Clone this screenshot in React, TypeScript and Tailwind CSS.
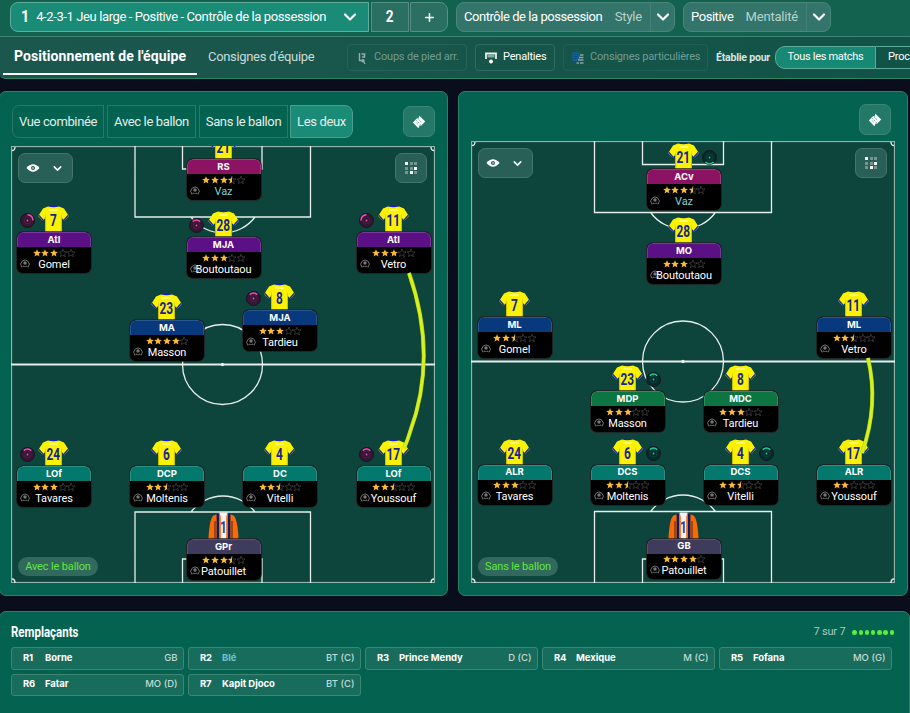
import type { ReactNode } from "react";
import { ChevronDown, Plus } from "lucide-react";
import { clsx } from "clsx";

type Arc = "top" | "bottom" | "left" | "right";

interface Player {
  num: number;
  role: string;
  name: string;
  stars: number;
  x: number;
  y: number;
  color: string;
  duty?: Arc;
  keeper?: boolean;
}

interface PitchProps {
  height: number;
  label: string;
  players: Player[];
  lines: string;
  radius: number;
  middle: [number, number];
  link: string;
  dutyColor: "pink" | "teal";
}

const PINK = "bg-[#8c1263] border-[#a13a7d]";
const PURPLE = "bg-[#5c1085] border-[#77389a]";
const BLUE = "bg-[#07397c] border-[#2c5590]";
const TEAL = "bg-[#03786c] border-[#2b9184]";
const GREEN = "bg-[#0c7541] border-[#328c5e]";
const SLATE = "bg-[#3f3b5d] border-[#56526f]";

const WITH_BALL: Player[] = [
  { num: 21, role: "RS", name: "Vaz", stars: 3.5, x: 212.5, y: 13, color: PINK },
  { num: 7, role: "AtI", name: "Gomel", stars: 3, x: 43, y: 86, color: PURPLE, duty: "right" },
  { num: 28, role: "MJA", name: "Boutoutaou", stars: 3, x: 212.5, y: 91, color: PURPLE, duty: "top" },
  { num: 11, role: "AtI", name: "Vetro", stars: 3, x: 382.5, y: 86, color: PURPLE, duty: "left" },
  { num: 23, role: "MA", name: "Masson", stars: 4, x: 156, y: 174, color: BLUE },
  { num: 8, role: "MJA", name: "Tardieu", stars: 3, x: 269, y: 164, color: BLUE, duty: "top" },
  { num: 24, role: "LOf", name: "Tavares", stars: 3, x: 43, y: 320, color: TEAL, duty: "top" },
  { num: 6, role: "DCP", name: "Moltenis", stars: 2.5, x: 156, y: 320, color: TEAL },
  { num: 4, role: "DC", name: "Vitelli", stars: 2.5, x: 269, y: 320, color: TEAL },
  { num: 17, role: "LOf", name: "Youssouf", stars: 2.5, x: 382.5, y: 320, color: TEAL, duty: "top" },
  { num: 1, role: "GPr", name: "Patouillet", stars: 3.5, x: 212.5, y: 393, color: SLATE, keeper: true },
];

const WITHOUT_BALL: Player[] = [
  { num: 21, role: "ACv", name: "Vaz", stars: 3.5, x: 213, y: 28, color: PINK, duty: "bottom" },
  { num: 28, role: "MO", name: "Boutoutaou", stars: 3, x: 213, y: 102, color: PURPLE },
  { num: 7, role: "ML", name: "Gomel", stars: 2.5, x: 43.5, y: 176, color: BLUE },
  { num: 11, role: "ML", name: "Vetro", stars: 2.5, x: 383, y: 176, color: BLUE },
  { num: 23, role: "MDP", name: "Masson", stars: 3, x: 156.5, y: 250, color: GREEN, duty: "top" },
  { num: 8, role: "MDC", name: "Tardieu", stars: 3, x: 269.5, y: 250, color: GREEN },
  { num: 24, role: "ALR", name: "Tavares", stars: 3, x: 43.5, y: 323.5, color: TEAL },
  { num: 6, role: "DCS", name: "Moltenis", stars: 2.5, x: 156.5, y: 323.5, color: TEAL, duty: "top" },
  { num: 4, role: "DCS", name: "Vitelli", stars: 2.5, x: 269.5, y: 323.5, color: TEAL, duty: "top" },
  { num: 17, role: "ALR", name: "Youssouf", stars: 2, x: 383, y: 323.5, color: TEAL },
  { num: 1, role: "GB", name: "Patouillet", stars: 4, x: 213, y: 397.5, color: SLATE, keeper: true },
];

const SUBS = [
  { id: "R1", name: "Borne", pos: "GB" },
  { id: "R2", name: "Blé", pos: "BT (C)", highlight: true },
  { id: "R3", name: "Prince Mendy", pos: "D (C)" },
  { id: "R4", name: "Mexique", pos: "M (C)" },
  { id: "R5", name: "Fofana", pos: "MO (G)" },
  { id: "R6", name: "Fatar", pos: "MO (D)" },
  { id: "R7", name: "Kapit Djoco", pos: "BT (C)" },
];

const STAR = "M4 0.2 5.05 2.85 7.9 3 5.7 4.8 6.45 7.6 4 6.05 1.55 7.6 2.3 4.8 0.1 3 2.95 2.85Z";
const HALF_STAR = "M4 0.2V6.05L1.55 7.6 2.3 4.8 0.1 3 2.95 2.85Z";

function Star({ value }: { value: number }) {
  return (
    <svg viewBox="0 0 8 8" className="size-2">
      {value < 1 && (
        <path d={STAR} fill="none" stroke="#7c7c7c" strokeWidth="0.6" strokeDasharray="1 0.5" />
      )}
      {value > 0 && <path d={value >= 1 ? STAR : HALF_STAR} fill="#fbbb35" />}
    </svg>
  );
}

function Shirt({ num }: { num: number }) {
  return (
    <svg viewBox="0 0 31 27" className="h-[27px] w-[31px]">
      <path d="M12 0.8H19L20 2.8H11Z" fill="#1420c4" />
      <path d="M10 1.6Q15.5 3 21 1.6L26 3.4 30.8 11 26.4 15.8 23.9 13V27H7.1V13L4.6 15.8 0.2 11 5 3.4Z" fill="#fbf203" />
      <path d="M0.2 10.4 4.7 16 5.6 14.8 1 9.4ZM30.8 10.4 26.3 16 25.4 14.8 30 9.4Z" fill="#1a25bb" />
      <path d="M7.1 13.2 8 8 8.2 27H7.1ZM23.9 13.2 23 8 22.8 27H23.9Z" fill="#c9bd08" />
      <path d="M11 5H20" stroke="#fffa8c" strokeWidth="1.6" />
      <text
        x="0"
        y="0"
        transform="translate(15.3 20.8) scale(0.74 1)"
        textAnchor="middle"
        className="font-['Roboto'] text-[16px] font-bold"
        fill="#16239a"
      >
        {num}
      </text>
    </svg>
  );
}

function KeeperShirt({ num }: { num: number }) {
  return (
    <svg viewBox="0 0 31 27" className="h-[27px] w-[31px]">
      <path d="M11 1.5 5.5 3.4Q1.5 6 0.4 27H30.6Q29.5 6 25.5 3.4L20 1.5Z" fill="#fb6805" />
      <path d="M7 9V27M24 9V27" stroke="#5c3424" strokeWidth="1.2" />
      <path d="M9.8 2V27M21.2 2V27" stroke="#0d1d63" strokeWidth="2.4" />
      <path d="M11.6 1H19.4V27H11.6Z" fill="#fb6805" />
      <path d="M11.5 0.5H19.5L18.2 5V27H12.8V5Z" fill="#f3f3f6" />
      <text
        x="0"
        y="0"
        transform="translate(15.3 20.8) scale(0.74 1)"
        textAnchor="middle"
        className="font-['Roboto'] text-[16px] font-bold"
        fill="#2c3f9e"
      >
        {num}
      </text>
    </svg>
  );
}

const ARC_PATHS: Record<Arc, string> = {
  top: "M3.8 3.6Q7.5 0.4 11.2 3.6",
  right: "M7.5 1.8Q12.8 2.2 13 7.5",
  left: "M2 7.5Q2.2 2.2 7.5 1.8",
  bottom: "M3.4 12Q7.5 15.4 11.6 12",
};

function Duty({ arc, color }: { arc: Arc; color: "pink" | "teal" }) {
  const bright = color === "pink" ? "#f24fb4" : "#11d6a4";
  const dark = color === "pink" ? "#351633" : "#082c2c";
  return (
    <svg viewBox="0 0 15 15" className="size-[15px]">
      <circle cx="7.5" cy="7.5" r="7" fill={dark} stroke="#160e1c" strokeWidth="0.8" />
      <circle cx="7.5" cy="7.5" r="3.4" fill="none" stroke={bright} strokeOpacity="0.12" />
      <circle cx="7.5" cy="7.5" r="0.9" fill={bright} />
      <path d={ARC_PATHS[arc]} fill="none" stroke={bright} strokeWidth="1.5" />
    </svg>
  );
}

function PersonIcon() {
  return (
    <svg viewBox="0 0 10 10" className="absolute bottom-[4px] left-[3px] size-[10px]">
      <path d="M1.8 8A4.2 4.2 0 1 1 8.2 8" fill="none" stroke="#707070" strokeWidth="1" />
      <circle cx="5" cy="4" r="1.7" fill="#777" />
      <path d="M1 9.2 3.4 6.4Q5 7.4 6.6 6.4L9 9.2 6.8 7.8H3.2Z" fill="#707070" />
    </svg>
  );
}

function PlayerCard({ player, dutyColor }: { player: Player; dutyColor: "pink" | "teal" }) {
  return (
    <div
      className="absolute w-[74px]"
      style={{ left: player.x - 37, top: player.y - 27 }}
    >
      <div className="flex h-[27px] justify-center pr-px">
        {player.keeper ? <KeeperShirt num={player.num} /> : <Shirt num={player.num} />}
      </div>
      {player.duty && (
        <div className={clsx("absolute top-[8px]", dutyColor === "pink" ? "left-[2.5px]" : "left-[55px]")}>
          <Duty arc={player.duty} color={dutyColor} />
        </div>
      )}
      <div className="relative h-[40.5px] overflow-hidden rounded-[6px] bg-black shadow-[0_0_0_0.8px_#231f22]">
        <div
          className={clsx(
            "flex h-[15px] items-center justify-center rounded-t-[6px] border border-b-0 font-['Inter'] text-[9.5px] font-bold text-white",
            player.color
          )}
        >
          {player.role}
        </div>
        <div className="mt-[1.5px] flex justify-center gap-[0.7px]">
          {[0, 1, 2, 3, 4].map((i) => (
            <Star key={i} value={player.stars - i} />
          ))}
        </div>
        <PersonIcon />
        <div
          className={clsx(
            "relative text-center text-[11px] leading-[16px] tracking-[-0.1px]",
            player.name === "Vaz" ? "text-[#7fd0dc]" : "text-white"
          )}
        >
          {player.name}
        </div>
      </div>
    </div>
  );
}

function GlassButton({ className, children }: { className?: string; children: ReactNode }) {
  return (
    <div
      className={clsx(
        "flex items-center justify-center rounded-[7px] border border-[#43756b] bg-[#285f57] text-white",
        className
      )}
    >
      {children}
    </div>
  );
}

function EyeIcon() {
  return (
    <svg viewBox="0 0 14 8" className="h-2 w-3.5">
      <path d="M0.5 4Q3.5 0.3 7 0.3T13.5 4Q10.5 7.7 7 7.7T0.5 4Z" fill="#fff" />
      <circle cx="7" cy="4" r="2" fill="#285f57" />
      <circle cx="7" cy="4" r="0.8" fill="#fff" />
    </svg>
  );
}

function TicketIcon() {
  return (
    <svg viewBox="0 0 14 14" className="size-3.5">
      <path d="M0.8 7.5 5.2 3.1 6.3 4 7.4 0.8 13.2 6.4 8.9 10.9 7.9 10.1 6.4 13.2Z" fill="#fff" />
      <path d="M4.2 5.3 8.6 9.8M6.6 4.4 10 7.8M4.4 7.9 6 9.4" stroke="#237867" strokeWidth="0.7" strokeDasharray="1.6 0.9" />
    </svg>
  );
}

const GRID_ALPHA = [1, 0.35, 0.35, 0.35, 0.35, 1, 0.35, 1, 0.35];

function GridIcon() {
  return (
    <div className="grid grid-cols-3 gap-[1.5px]">
      {GRID_ALPHA.map((a, i) => (
        <span key={i} className="size-[3px] bg-white" style={{ opacity: a }} />
      ))}
    </div>
  );
}

function Pitch({ height, label, players, lines, radius, middle, link, dutyColor }: PitchProps) {
  const [cx, cy] = middle;
  return (
    <div className="relative w-[424px] overflow-hidden bg-[#0d443c]" style={{ height }}>
      <svg className="absolute inset-0" width="424" height={height} fill="none" stroke="#e6efec" strokeWidth="1.3">
        <rect x="0.5" y="0.5" width="423" height={height - 1} stroke="#8fb3aa" />
        <path d={lines} />
        <circle cx={cx} cy={cy} r={radius} />
        <circle cx={cx} cy={cy} r="1" fill="#fff" />
        <path d={`M0 ${cy}H424`} strokeWidth="1.8" />
        <path d={`M1 4.5Q4 4.5 4 1M423 4.5Q420 4.5 420 1M1 ${height - 4}Q4 ${height - 4} 4 ${height}M423 ${height - 4}Q420 ${height - 4} 420 ${height}`} />
      </svg>
      {players.map((p) => (
        <PlayerCard key={p.num} player={p} dutyColor={dutyColor} />
      ))}
      <svg className="absolute inset-0" width="424" height={height} fill="none">
        <path d={link} stroke="#a9c71d" strokeWidth="4" />
        <path d={link} stroke="#d6f01c" strokeWidth="3" />
      </svg>
      <GlassButton className="absolute left-[7px] top-[7px] h-[30px] w-[55px] gap-[11px] pr-px">
        <EyeIcon />
        <ChevronDown size={13} strokeWidth={2.8} />
      </GlassButton>
      <GlassButton className="absolute right-[8px] top-[7px] h-[30px] w-[32px]">
        <GridIcon />
      </GlassButton>
      <div className="absolute bottom-[7px] left-[7px] flex h-[19px] w-[80px] items-center justify-center rounded-full bg-[#32695d] pt-px text-[11px] tracking-[-0.15px] text-[#5ee83c]">
        {label}
      </div>
    </div>
  );
}

function Select({ value, hint, className }: { value: string; hint: string; className: string }) {
  return (
    <div
      className={clsx(
        "flex h-[30px] items-center rounded-[8px] border border-[#4a8778] bg-[#33756a] text-[13px] tracking-[-0.45px]",
        className
      )}
    >
      <span className="whitespace-nowrap pl-[7px] text-white">{value}</span>
      <span className="ml-auto pr-[8px] tracking-[-0.2px] text-[#b8d3cc]">{hint}</span>
      <span className="flex h-full w-[24px] items-center justify-center border-l border-[#467f73] text-white">
        <ChevronDown size={20} strokeWidth={2.6} className="shrink-0" />
      </span>
    </div>
  );
}

function TopBar() {
  return (
    <div className="flex h-[37px] items-start border-b border-[#408374] bg-[#12624f] pl-[10px] pt-[2px]">
      <div className="flex h-[30px] gap-[2px] text-white">
        <div className="flex w-[359px] items-center rounded-l-[8px] border border-[#5fae9b] bg-[#198b76] pl-[10px]">
          <span className="origin-left scale-x-90 text-[16px] font-bold">1</span>
          <span className="ml-[6px] whitespace-nowrap text-[13px] tracking-[-0.39px]">
            4-2-3-1 Jeu large - Positive - Contrôle de la possession
          </span>
          <ChevronDown size={20} strokeWidth={2.6} className="ml-auto mr-[8px]" />
        </div>
        <div className="flex w-[38px] items-center justify-center border border-[#559082] bg-[#2a6f61] text-[16px] font-bold">
          <span className="scale-x-85">2</span>
        </div>
        <div className="-ml-px flex w-[38px] items-center justify-center rounded-r-[8px] border border-[#559082] bg-[#2a6f61]">
          <Plus size={13} strokeWidth={2.8} />
        </div>
      </div>
      <Select value="Contrôle de la possession" hint="Style" className="ml-[8px] w-[219px]" />
      <Select value="Positive" hint="Mentalité" className="ml-[8px] w-[148px]" />
    </div>
  );
}

function CornerIcon() {
  return (
    <svg viewBox="0 0 10 12" className="h-3 w-2.5" fill="none" stroke="#8fb0a9">
      <path d="M2.5 1V8.5H5" strokeWidth="1.4" />
      <path d="M4.5 2H7.5V5H5" strokeWidth="1.6" />
      <circle cx="6" cy="8.8" r="1.7" fill="#8fb0a9" stroke="none" />
      <path d="M6.5 9.5 8 12" strokeWidth="1.3" />
    </svg>
  );
}

function PenaltyIcon() {
  return (
    <svg viewBox="0 0 12 12" className="size-3">
      <path d="M1 7V1.5H11V7" fill="none" stroke="#e8efed" strokeWidth="1.8" />
      <path d="M2.5 3H9.5V5.5H2.5Z" fill="#86a9a1" />
      <circle cx="6" cy="9.5" r="2" fill="#fff" />
    </svg>
  );
}

function ListIcon() {
  return (
    <svg viewBox="0 0 12 12" className="size-3">
      <path d="M0.5 0.5H7.5V9H0.5Z" fill="#0f62a0" />
      <path d="M2 2.5H6.5M2 4.5H6M2 6.5H5" stroke="#0b4a80" strokeWidth="0.9" />
      <path d="M8 3H11.5M7 5.5H11.5M6 8H11.5M4.5 11H7M8 11H11.5" stroke="#84a8a0" strokeWidth="1.5" />
    </svg>
  );
}

function NavBar() {
  return (
    <div className="flex h-[42px] overflow-hidden rounded-bl-[5px] border-b border-[#2f8367] bg-gradient-to-r from-[#1c574e] to-[#125347] pl-[3px]">
      <div className="flex h-[38px] w-[194px] shrink-0 justify-center border-b-2 border-white pt-[9px] text-[14px] font-bold leading-[20px] text-white">
        <span className="whitespace-nowrap tracking-[0.08px]">Positionnement de l'équipe</span>
      </div>
      <div className="ml-[11px] w-[125px] shrink-0 whitespace-nowrap pt-[10px] text-[13px] leading-[20px] tracking-[-0.33px] text-[#c9dcd8]">
        Consignes d'équipe
      </div>
      <div className="mt-[7px] flex h-[27px] shrink-0 items-center whitespace-nowrap text-[11px] tracking-[-0.2px]">
        <div className="ml-[14px] flex h-full w-[120px] items-center rounded-[4px] border border-[#256258] pl-[9px] text-[#719c93]">
          <CornerIcon />
          <span className="ml-[7px]">Coups de pied arr.</span>
        </div>
        <div className="ml-[8px] flex h-full w-[80px] items-center rounded-[4px] border border-[#316c60] pl-[9px] text-white">
          <PenaltyIcon />
          <span className="ml-[6px]">Penalties</span>
        </div>
        <div className="ml-[8px] flex h-full w-[145px] items-center rounded-[4px] border border-[#206154] pl-[8px] text-[#719c93]">
          <ListIcon />
          <span className="ml-[6px]">Consignes particulières</span>
        </div>
        <span className="ml-[8px] w-[59px] text-[10.5px] font-bold text-[#d6e5e1]">Établie pour</span>
        <div className="flex h-[23px]">
          <div className="flex w-[101px] items-center justify-center rounded-l-[10px] border border-[#5bac99] bg-[#178873] text-white">
            <span className="tracking-[-0.3px]">Tous les matchs</span>
          </div>
          <div className="flex w-[35px] items-center border-y border-[#5bac99] pl-[12px] text-white">Proc</div>
        </div>
      </div>
    </div>
  );
}

function ViewTabs() {
  const base = "flex items-center justify-center border border-[#2c7766] whitespace-nowrap";
  return (
    <div className="flex h-[33px] gap-[3px] text-[13px] tracking-[-0.36px] text-[#e2eeeb]">
      <div className={clsx(base, "w-[92px] rounded-l-[7px]")}>Vue combinée</div>
      <div className={clsx(base, "w-[89px]")}>Avec le ballon</div>
      <div className={clsx(base, "w-[89px]")}>Sans le ballon</div>
      <div className="-ml-px flex w-[63px] items-center justify-center rounded-r-[8px] border border-[#489f8c] bg-[#198b76]">
        Les deux
      </div>
    </div>
  );
}

const PANEL = "rounded-[7px] border border-[#2f7f67] bg-[#046250]";

export default function App() {
  return (
    <div className="h-[713px] w-[910px] overflow-hidden bg-[#0a0e1c] font-['Roboto',sans-serif]">
      <TopBar />
      <NavBar />

      <div className="-ml-px mt-[12px] flex gap-[10px]">
        <div className={clsx(PANEL, "h-[505px] w-[449px] pl-[11px]")}>
          <div className="flex items-center pb-[8px] pl-px pt-[13px]">
            <ViewTabs />
            <GlassButton className="ml-auto mr-[12px] h-[31px] w-[32px] border-[#3c8676]! bg-[#237867]!">
              <TicketIcon />
            </GlassButton>
          </div>
          <Pitch
            height={437}
            label="Avec le ballon"
            players={WITH_BALL}
            dutyColor="pink"
            middle={[211.5, 218.5]}
            radius={40}
            lines="M124 0V71H299.5V0M171.5 0V23H251V0M124 437V366H299.5V437M171.5 437V413H251V437M180 71A40 40 0 0 0 244 71M180 366A40 40 0 0 1 244 366"
            link="M398 127Q427 210 399 286Q396 296 393 302"
          />
        </div>
        <div className={clsx(PANEL, "h-[505px] w-[450px] pl-[12px]")}>
          <div className="flex justify-end pb-[6px] pr-[16px] pt-[12px]">
            <GlassButton className="h-[31px] w-[32px] border-[#3c8676]! bg-[#237867]!">
              <TicketIcon />
            </GlassButton>
          </div>
          <Pitch
            height={442}
            label="Sans le ballon"
            players={WITHOUT_BALL}
            dutyColor="teal"
            middle={[212, 220.5]}
            radius={40.5}
            lines="M123.5 0V71.5H300.5V0M171.5 0V23.5H252.5V0M123.5 442V370.5H300.5V442M171.5 442V418H252.5V442M180 72A40 40 0 0 0 244 72M180 370A40 40 0 0 1 244 370"
            link="M397 217Q408 264 391 312"
          />
        </div>
      </div>

      <div className="-ml-px mt-[15px] h-[120px] w-[911px] rounded-[7px] border border-[#2f7f67] bg-[#046250] px-[11px] pt-[9px]">
        <div className="flex h-[22px] items-center justify-between pr-[4px]">
          <h2 className="origin-left scale-x-[0.74] pt-px text-[15.5px] font-bold text-white">Remplaçants</h2>
          <div className="flex items-center gap-[7px] pt-px text-[11px] tracking-[-0.2px] text-[#a9cbc2]">
            7 sur 7
            <div className="flex gap-[1.7px]">
              {SUBS.map((s) => (
                <span key={s.id} className="size-[4.5px] rounded-full bg-[#57ee3f]" />
              ))}
            </div>
          </div>
        </div>
        <div className="mt-[4px] grid grid-cols-[repeat(5,172.5px)] gap-x-[4.5px] gap-y-[4px]">
          {SUBS.map((s) => (
            <div
              key={s.id}
              className="flex h-[22.5px] items-center rounded-[3px] border border-[#3f8572] bg-[#186c5c] pb-px pl-[11px] pr-[5px] font-['Inter'] text-[9.5px] font-bold text-white"
            >
              <span className="w-[22px] tracking-[-0.2px]">{s.id}</span>
              <span className={clsx("tracking-[-0.05px]", s.highlight && "text-[#6fc3d3]")}>{s.name}</span>
              <span className="ml-auto font-medium text-[#c3dbd5]">{s.pos}</span>
            </div>
          ))}
        </div>
      </div>
    </div>
  );
}
